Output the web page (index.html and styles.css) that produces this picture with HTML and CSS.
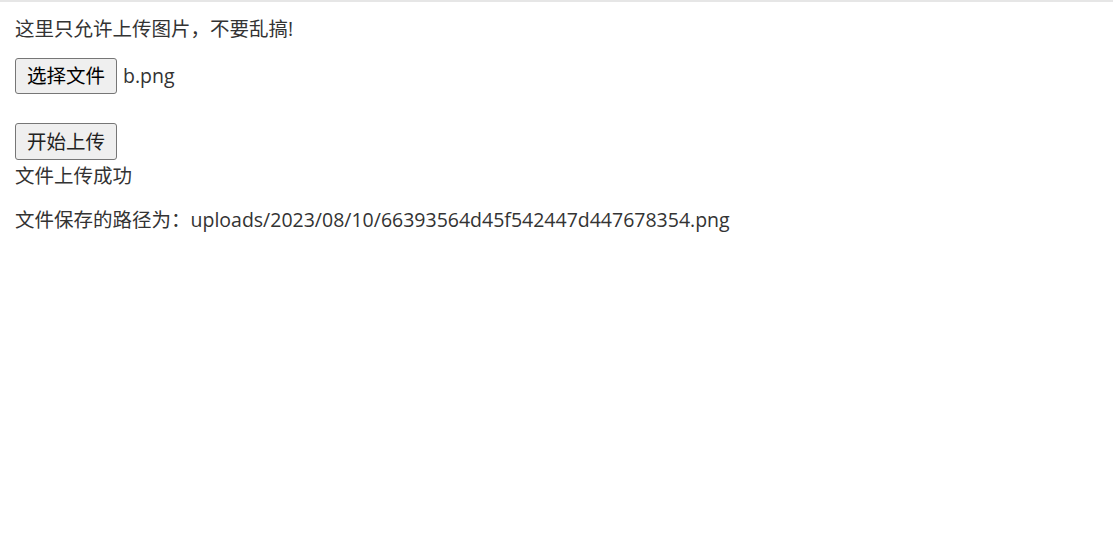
FILE: index.html
```html
<!DOCTYPE html>
<html lang="zh">
<head>
<meta charset="utf-8">
<link rel="stylesheet" href="styles.css">
</head>
<body>
<form class="upload">
  <p class="intro">这里只允许上传图片，不要乱搞!</p>
  <div class="file-row">
    <button type="button" class="btn">选择文件</button>
    <span class="file-name">b.png</span>
  </div>
  <div class="submit-row">
    <button type="button" class="btn btn-submit">开始上传</button>
  </div>
</form>
<div class="result">
  <div class="msg">文件上传成功</div>
  <p class="path">文件保存的路径为：uploads/2023/08/10/66393564d45f542447d447678354.png</p>
</div>
</body>
</html>
```
FILE: styles.css
```css
html, body {
  margin: 0;
  background: #fff;
}
body {
  border-top: 2px solid #e6e6e6;
  padding: 0 15px;
  font-family: "Open Sans", "Noto Sans CJK SC", sans-serif;
  font-size: 19.5px;
  line-height: 24px;
  color: #333;
}
.intro {
  margin: 15px 0 17px;
}
.file-row {
  display: flex;
  align-items: center;
  gap: 6px;
}
.submit-row {
  margin-top: 29px;
}
.btn {
  font-family: "Open Sans", "Noto Sans CJK SC", sans-serif;
  font-size: 19.5px;
  line-height: 24px;
  width: 102px;
  height: 36px;
  padding: 0;
  color: #000;
  background: #efefef;
  border: 1px solid #767676;
  border-radius: 3px;
}
.btn-submit {
  height: 37px;
  color: #222;
}
.file-name {
  color: #333;
}
.msg {
  margin-top: 4px;
}
.path {
  margin: 20px 0 0;
}
```
